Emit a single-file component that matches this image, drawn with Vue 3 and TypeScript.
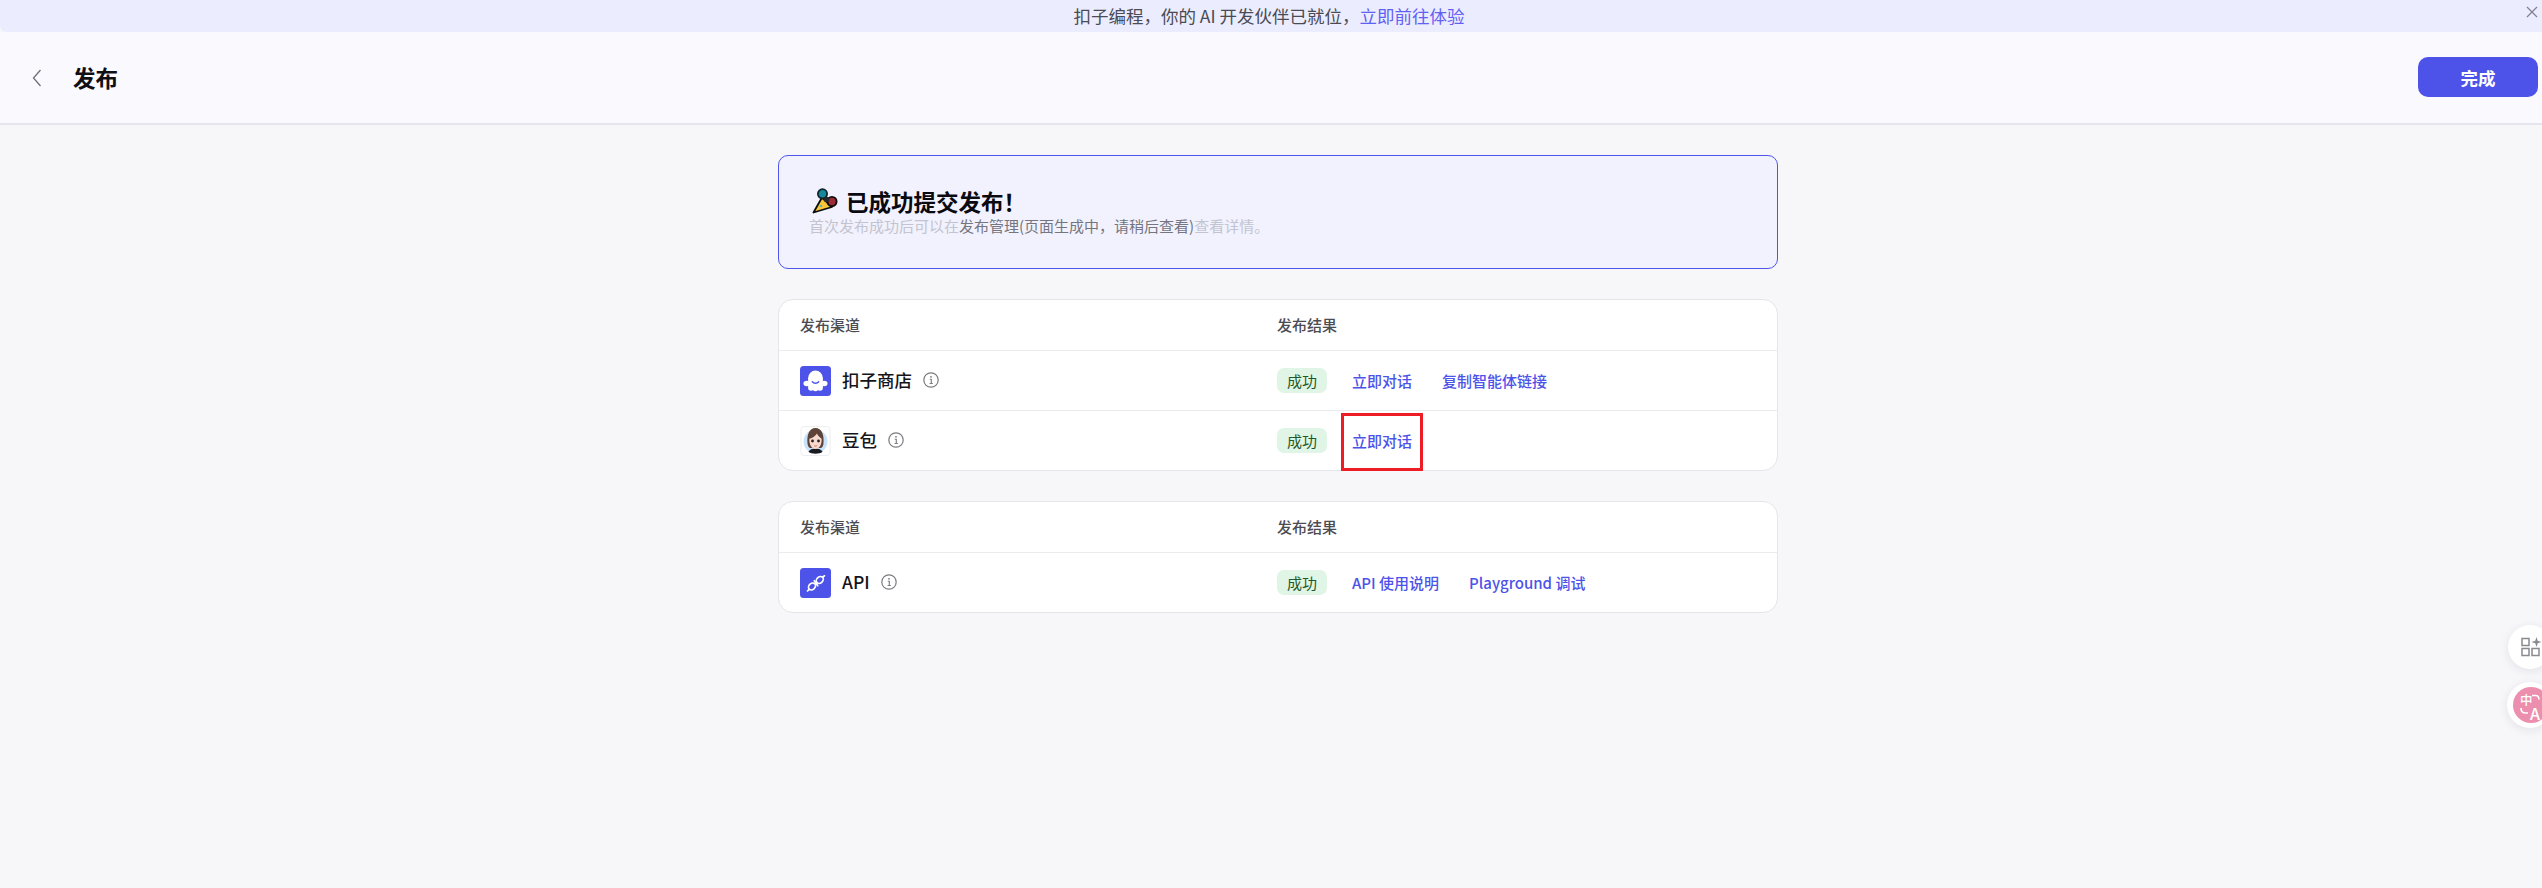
<script setup lang="ts">
type Action = { label: string }
type Channel = { name: string; icon: 'store' | 'doubao' | 'api'; actions: Action[]; marked?: boolean }

const groups: Channel[][] = [
  [
    { name: '扣子商店', icon: 'store', actions: [{ label: '立即对话' }, { label: '复制智能体链接' }] },
    { name: '豆包', icon: 'doubao', actions: [{ label: '立即对话' }], marked: true },
  ],
  [
    { name: 'API', icon: 'api', actions: [{ label: 'API 使用说明' }, { label: 'Playground 调试' }] },
  ],
]
</script>

<template>
  <div class="page">
    <div class="banner">
      <span>扣子编程，你的 AI 开发伙伴已就位，<a class="banner__link">立即前往体验</a></span>
      <svg class="banner__close" viewBox="0 0 12 12" width="12" height="12">
        <path d="M1 1l10 10M11 1L1 11" fill="none" stroke="#7f7f90" stroke-width="1.2" />
      </svg>
    </div>

    <header class="header">
      <svg class="header__back" viewBox="0 0 10 18" width="10" height="18">
        <path d="M8.5 1L1.5 9l7 8" fill="none" stroke="#6f6f78" stroke-width="1.3" />
      </svg>
      <h1 class="header__title">发布</h1>
      <button class="header__done">完成</button>
    </header>

    <main class="main">
      <section class="hero">
        <div class="hero__title">
          <svg class="hero__emoji" viewBox="0 0 26 26" width="26" height="26">
            <path d="M1.5 24.5L10 9.5l10 9.500z" fill="#f9c63a" stroke="#0c0c0c" stroke-width="1.800" stroke-linejoin="round" />
            <circle cx="10.500" cy="5.800" r="4.600" fill="#13899e" stroke="#10242c" stroke-width="1.800" />
            <circle cx="20" cy="13.500" r="4.600" fill="#9c2b33" stroke="#0c0c0c" stroke-width="1.800" />
            <circle cx="14.500" cy="11.500" r="2.800" fill="#26262b" />
            <circle cx="9" cy="18" r="1.100" fill="#33b5c9" />
          </svg>
          <span>已成功提交发布！</span>
        </div>
        <p class="hero__desc">首次发布成功后可以在<span class="hero__strong">发布管理(页面生成中，请稍后查看)</span>查看详情。</p>
      </section>

      <section v-for="(rows, i) in groups" :key="i" class="card">
        <div class="row row--head">
          <div class="row__channel"><span class="row__label">发布渠道</span></div>
          <div class="row__result"><span class="row__label">发布结果</span></div>
        </div>
        <div v-for="row in rows" :key="row.name" class="row">
          <div class="row__channel">
            <svg v-if="row.icon === 'store'" class="logo" viewBox="0 0 31 30">
              <rect width="31" height="30" rx="3.500" fill="#4d53e8" />
              <g fill="#fff">
                <circle cx="15.500" cy="11.800" r="7.300" />
                <rect x="8.200" y="11.800" width="14.600" height="9.500" />
                <ellipse cx="6.800" cy="17.500" rx="3.300" ry="2.700" />
                <ellipse cx="24.200" cy="17.500" rx="3.300" ry="2.700" />
                <circle cx="11" cy="21.800" r="2.900" />
                <circle cx="15.500" cy="22.300" r="2.900" />
                <circle cx="20" cy="21.800" r="2.900" />
              </g>
              <path d="M12.300 15.800c1.600 1.900 4.800 1.900 6.400 0" fill="none" stroke="#4d53e8" stroke-width="1.400" stroke-linecap="round" />
            </svg>
            <svg v-else-if="row.icon === 'doubao'" class="logo" viewBox="0 0 32 32">
              <rect x=".5" y=".5" width="31" height="31" rx="3.500" fill="#fff" stroke="#ececf0" />
              <circle cx="16" cy="16.500" r="12.800" fill="#c9e4fa" />
              <path d="M8.500 27.500c1.500-2.500 4-3.500 7.500-3.500s6 1 7.500 3.500c-2 1.500-4.500 2-7.500 2s-5.500-.5-7.500-2z" fill="#1b1b1f" />
              <path d="M7.500 19C6.500 9 9.500 2 16 2s9.500 7 8.500 17c-.2 2-1 3.500-2.500 4.500H10C8.500 22.500 7.700 21 7.500 19z" fill="#5d4338" />
              <path d="M9.500 13.500c3.500-.8 6.500-2.800 8-5.500 1 2.500 3.500 4.500 5 5.500.5 6-2.500 11-6.500 11s-7-5-6.500-11z" fill="#f6dacd" />
              <circle cx="12.800" cy="16" r="1.500" fill="#2c1f1c" />
              <circle cx="19.200" cy="16" r="1.500" fill="#2c1f1c" />
              <path d="M14.500 21c1 .6 2 .6 3 0" fill="none" stroke="#c2605f" stroke-width="1" />
            </svg>
            <svg v-else class="logo" viewBox="0 0 31 30">
              <rect width="31" height="30" rx="3.500" fill="#4d53e8" />
              <g fill="none" stroke="#fff" stroke-width="1.700" stroke-linecap="round">
                <ellipse cx="12" cy="18.500" rx="3.800" ry="3" transform="rotate(-40 12 18.500)" />
                <ellipse cx="19.800" cy="12" rx="3.800" ry="3" transform="rotate(-40 19.800 12)" />
                <path d="M9 21.500L7.500 23M22.800 9L24.500 7.800M14.300 12.700l3.400 5" />
              </g>
            </svg>
            <span class="row__name">{{ row.name }}</span>
            <svg class="info" viewBox="0 0 16 16" width="16" height="16">
              <circle cx="8" cy="8" r="7.200" fill="none" stroke="#7b7b80" stroke-width="1.200" />
              <circle cx="8" cy="4.800" r=".9" fill="#7b7b80" />
              <path d="M6.800 7.200H8.300V11.300M6.600 11.500h3.200" fill="none" stroke="#7b7b80" stroke-width="1.100" />
            </svg>
          </div>
          <div class="row__result">
            <span class="badge">成功</span>
            <span class="links">
              <a v-for="action in row.actions" :key="action.label" class="link">{{ action.label }}</a>
              <span v-if="row.marked" class="marker"></span>
            </span>
          </div>
        </div>
      </section>
    </main>

    <div class="float float--tools">
      <svg viewBox="0 0 22 20" width="22" height="20">
        <g fill="none" stroke="#8a8a8f" stroke-width="1.500">
          <rect x="1" y="1.500" width="7" height="7" />
          <rect x="1" y="11.500" width="7" height="7" />
          <rect x="11" y="11.500" width="7" height="7" />
        </g>
        <path d="M15.500 0l1.200 3.800 3.800 1.200-3.800 1.200L15.500 10l-1.200-3.800L10.500 5l3.800-1.200z" fill="#8a8a8f" />
      </svg>
    </div>
    <div class="float float--lang">
      <span class="lang">
        <span class="lang__zh">中</span>
        <span class="lang__en">A</span>
        <svg class="lang__arcs" viewBox="0 0 36 36" width="36" height="36">
          <path d="M19 8.500h3.500c2 0 3.500 1.500 3.500 4M8 21c0 3 1.500 5 4.500 5H15" fill="none" stroke="#fff" stroke-width="1.600" />
        </svg>
      </span>
    </div>
  </div>
</template>

<style>
html,
body {
  margin: 0;
  background: #f7f7fa;
}
</style>

<style scoped>
.page {
  position: relative;
  width: 2542px;
  height: 888px;
  overflow: hidden;
  background: #f7f7fa;
  font-family: "Noto Sans CJK SC", "Noto Sans", sans-serif;
  color: #1c1d23;
}

.banner {
  position: relative;
  height: 32px;
  display: flex;
  align-items: center;
  justify-content: center;
  padding-right: 4px;
  box-sizing: border-box;
  background: #ebedff;
  border-bottom-left-radius: 6px;
  font-size: 17.500px;
  line-height: 24px;
  color: #4a4b55;
}

.banner__link {
  color: #625ff3;
}

.banner__close {
  position: absolute;
  right: 4px;
  top: 6px;
}

.header {
  height: 93px;
  box-sizing: border-box;
  display: flex;
  align-items: center;
  padding: 0 4px 1px 32px;
  background: #f9f9fe;
  border-bottom: 2px solid #e5e5ef;
}

.header__back {
  margin-top: 2px;
}

.header__title {
  margin: 0 0 0 31px;
  font-size: 22.500px;
  font-weight: 600;
  color: #0f0f14;
}

.header__done {
  margin-left: auto;
  width: 120px;
  height: 40px;
  border: 0;
  border-radius: 10px;
  background: #4d53e8;
  color: #fff;
  font: 600 17.500px "Noto Sans CJK SC", sans-serif;
}

.main {
  display: flex;
  flex-direction: column;
  gap: 30px;
  width: 1000px;
  margin-left: 778px;
  padding-top: 30px;
}

.hero {
  height: 114px;
  box-sizing: border-box;
  display: flex;
  flex-direction: column;
  justify-content: center;
  padding: 0 30px;
  border: 1px solid #4f55ec;
  border-radius: 10px;
  background: #f1f2fd;
}

.hero__title {
  display: flex;
  align-items: center;
  gap: 8px;
  height: 28px;
  font-size: 22.500px;
  font-weight: 600;
  color: #0a0a10;
}

.hero__emoji {
  margin-left: 3px;
}

.hero__desc {
  margin: 0;
  font-size: 15px;
  line-height: 22px;
  color: #c3c4d0;
}

.hero__strong {
  color: #75757f;
}

.card {
  border: 1px solid #e5e5ea;
  border-radius: 15px;
  background: #fff;
}

.row {
  display: grid;
  grid-template-columns: 498px 1fr;
  height: 60px;
  box-sizing: border-box;
}

.row + .row {
  border-top: 1px solid #ececef;
}

.row--head {
  height: 50px;
  font-size: 15px;
  font-weight: 500;
  color: #4c4c52;
}

.row__label {
  margin-bottom: 2px;
}

.row__channel {
  display: flex;
  align-items: center;
  padding-left: 21px;
}

.row__result {
  position: relative;
  display: flex;
  align-items: center;
}

.logo {
  width: 31px;
  height: 30px;
  margin-right: 11px;
  flex: none;
}

.row__name {
  margin-bottom: 2px;
  font-size: 17.500px;
  font-weight: 500;
  color: #14141a;
}

.info {
  margin: 0 0 2px 11px;
  flex: none;
}

.badge {
  width: 50px;
  height: 25px;
  border-radius: 7px;
  background: #e0f5e5;
  color: #1f5a2a;
  font-size: 15px;
  line-height: 25px;
  text-align: center;
}

.links {
  position: relative;
  display: flex;
  gap: 30px;
  margin-left: 25px;
}

.link {
  font-size: 15px;
  font-weight: 500;
  color: #4d53e8;
}

.marker {
  position: absolute;
  left: -11px;
  top: -17px;
  width: 82px;
  height: 58px;
  box-sizing: border-box;
  border: 3px solid #ee1c25;
}

.float {
  position: absolute;
  display: flex;
  align-items: center;
  border-radius: 50%;
  background: #fff;
  box-shadow: 0 2px 10px rgba(40, 40, 70, 0.1);
}

.float--tools {
  left: 2508px;
  top: 625px;
  width: 44px;
  height: 44px;
  padding-left: 13px;
  box-sizing: border-box;
}

.float--lang {
  left: 2507px;
  top: 682px;
  width: 46px;
  height: 46px;
  padding-left: 6px;
  box-sizing: border-box;
}

.lang {
  position: relative;
  display: block;
  flex: none;
  width: 36px;
  height: 36px;
  border-radius: 50%;
  background: #ec8fae;
  color: #fff;
  font-weight: 500;
  line-height: 1;
}

.lang__zh {
  position: absolute;
  left: 7px;
  top: 7px;
  font-size: 12.500px;
}

.lang__en {
  position: absolute;
  left: 17px;
  top: 18px;
  font-size: 16px;
}

.lang__arcs {
  position: absolute;
  left: 0;
  top: 0;
}
</style>
